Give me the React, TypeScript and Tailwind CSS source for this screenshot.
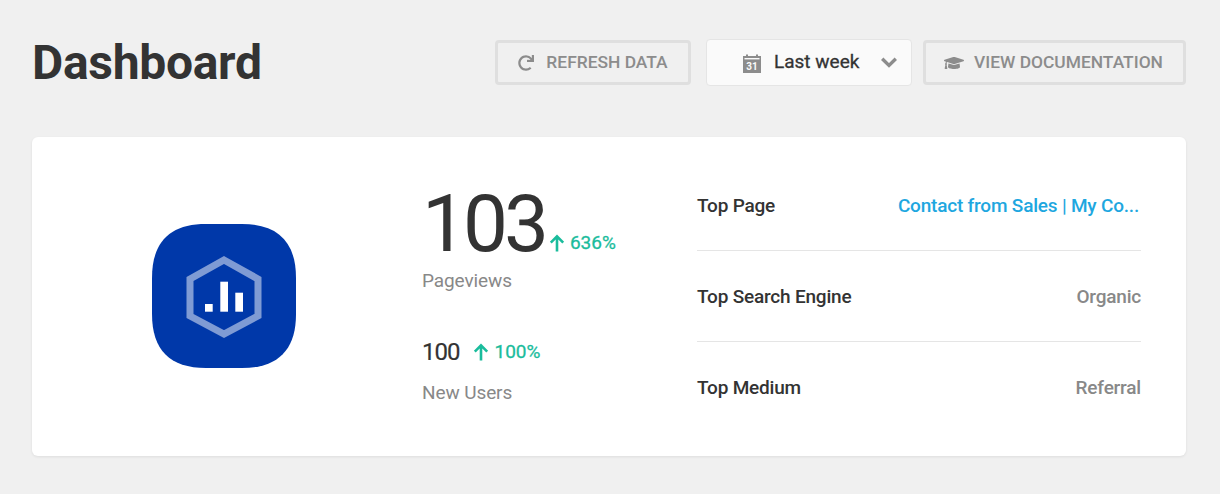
import { FaGraduationCap, FaRedo } from 'react-icons/fa';

function ArrowUp() {
  return (
    <svg width="16" height="18" viewBox="0 0 16 18" fill="none" stroke="#1abc9c" strokeWidth="2.6">
      <path d="M8 17.5V2.5M1.8 8.6L8 2.4l6.2 6.2" />
    </svg>
  );
}

function CalendarIcon() {
  return (
    <svg width="18" height="20" viewBox="0 0 18 20">
      <path d="M0 3H3V1.5H5V3H13V1.5H15V3H18V20H0Z" fill="#8c8c8c" />
      <rect x="1.5" y="5" width="15" height="1.4" fill="#fafafa" />
      <text x="9" y="17" textAnchor="middle" fontSize="10" fontWeight="700" fill="#fafafa" fontFamily="Roboto, sans-serif">31</text>
    </svg>
  );
}

function ChevronIcon() {
  return (
    <svg width="16" height="11" viewBox="0 0 16 11" fill="none" stroke="#8c8c8c" strokeWidth="3.4">
      <path d="M1.2 1.8L8 8.4l6.8-6.6" />
    </svg>
  );
}

function Logo() {
  return (
    <svg width="144" height="144" viewBox="0 0 144 144">
      <path d="M54 0H90C126 0 144 18 144 54V90C144 126 126 144 90 144H54C18 144 0 126 0 90V54C0 18 18 0 54 0Z" fill="#0038a9" />
      <path d="M72 36L106 55V92L72 110L38 92V55Z" fill="none" stroke="#7f9bd4" strokeWidth="7" />
      <rect x="53" y="80" width="7.7" height="7.7" fill="#fff" />
      <rect x="68.3" y="57.7" width="7.7" height="30" fill="#fff" />
      <rect x="83.3" y="68.7" width="7.7" height="19" fill="#fff" />
    </svg>
  );
}

function TopRow({ label, value, link, last }: { label: string; value: string; link?: boolean; last?: boolean }) {
  return (
    <div className={`flex h-[91px] items-center justify-between pt-[2px] ${last ? '' : 'border-b border-[#e5e5e5]'}`}>
      <span className="text-[19px] font-medium tracking-[-0.2px] text-[#333]">{label}</span>
      <span className={`text-[19px] font-medium tracking-[-0.2px] ${link ? 'pr-[2px] text-[#1ea7e0]' : 'text-[#888]'}`}>{value}</span>
    </div>
  );
}

export default function App() {
  return (
    <div className="h-[494px] w-[1220px] overflow-hidden bg-[#f0f0f0] px-[32px] font-['Roboto',sans-serif]">
      <div className="flex h-[137px] items-start justify-between pr-[2px]">
        <h1 className="mt-[33px] text-[48px] leading-[60px] font-bold tracking-[-0.3px] text-[#333]">Dashboard</h1>
        <div className="mt-[39px] flex items-center">
          <button className="flex h-[45px] w-[196px] items-center justify-center gap-[12px] rounded-[4px] border-[3px] border-[#dfdfdf] text-[17.4px] font-medium text-[#8c8c8c]">
            <FaRedo size={16} />
            REFRESH DATA
          </button>
          <div className="ml-[15px] flex h-[47px] w-[206px] items-center rounded-[4px] border border-[#e5e5e5] bg-[#fafafa] pr-[14px] pl-[36px]">
            <CalendarIcon />
            <span className="ml-[13px] flex-1 text-[19px] text-[#333] [-webkit-text-stroke:0.3px_#333]">Last week</span>
            <ChevronIcon />
          </div>
          <button className="ml-[11px] flex h-[45px] w-[263px] items-center justify-center gap-[10px] rounded-[4px] border-[3px] border-[#dfdfdf] pr-[2px] text-[17.4px] font-medium text-[#8c8c8c]">
            <FaGraduationCap size={20} />
            VIEW DOCUMENTATION
          </button>
        </div>
      </div>

      <div className="flex h-[319px] w-[1154px] rounded-[6px] bg-white shadow-[0_1px_3px_rgba(0,0,0,0.08)]">
        <div className="flex w-[390px] shrink-0 pt-[87px] pl-[120px]">
          <div className="h-[144px]">
            <Logo />
          </div>
        </div>
        <div className="w-[275px] shrink-0 pt-[47px]">
          <div className="flex items-baseline">
            <span className="text-[80px] leading-[80px] tracking-[-4px] text-[#333]">103</span>
            <span className="relative top-[1px] ml-[4px] flex items-center gap-[5px] text-[19px] text-[#1abc9c] [-webkit-text-stroke:0.3px_#1abc9c]">
              <ArrowUp />
              636%
            </span>
          </div>
          <div className="mt-[3px] text-[19px] leading-[28px] tracking-[-0.1px] text-[#888]">Pageviews</div>
          <div className="mt-[41px] flex items-center gap-[14px]">
            <span className="text-[24px] leading-[32px] tracking-[-1px] text-[#333] [-webkit-text-stroke:0.2px_#333]">100</span>
            <span className="flex items-center gap-[5px] text-[19px] text-[#1abc9c] [-webkit-text-stroke:0.3px_#1abc9c]">
              <ArrowUp />
              100%
            </span>
          </div>
          <div className="mt-[11px] text-[19px] leading-[28px] tracking-[-0.1px] text-[#888]">New Users</div>
        </div>
        <div className="w-[444px] shrink-0 pt-[23px]">
          <TopRow label="Top Page" value="Contact from Sales | My Co..." link />
          <TopRow label="Top Search Engine" value="Organic" />
          <TopRow label="Top Medium" value="Referral" last />
        </div>
      </div>
    </div>
  );
}
